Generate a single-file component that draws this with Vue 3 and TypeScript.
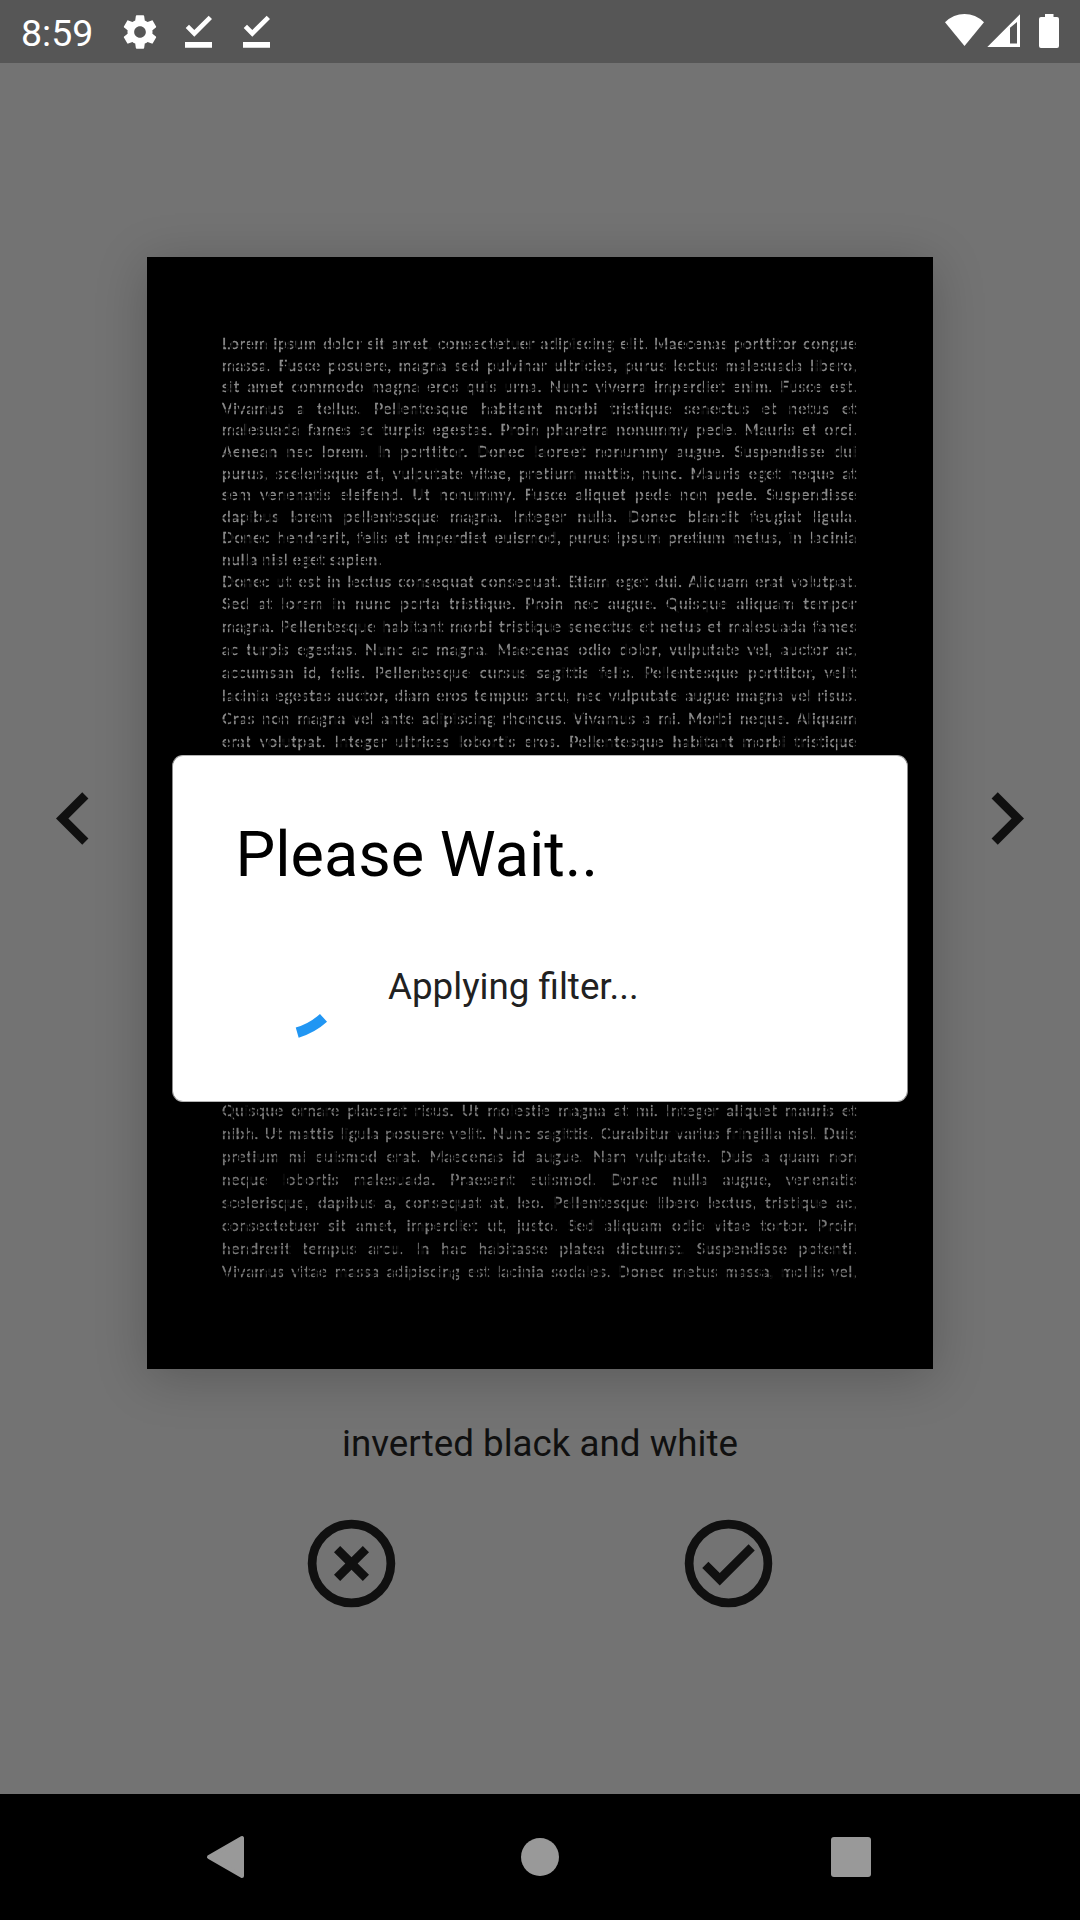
<script setup lang="ts">
interface Block {
  name: string
  lines: string[]
}

const blocks: Block[] = [
  {
    name: 'first',
    lines: [
      'Lorem ipsum dolor sit amet, consectetuer adipiscing elit. Maecenas porttitor congue',
      'massa. Fusce posuere, magna sed pulvinar ultricies, purus lectus malesuada libero,',
      'sit amet commodo magna eros quis urna. Nunc viverra imperdiet enim. Fusce est.',
      'Vivamus a tellus. Pellentesque habitant morbi tristique senectus et netus et',
      'malesuada fames ac turpis egestas. Proin pharetra nonummy pede. Mauris et orci.',
      'Aenean nec lorem. In porttitor. Donec laoreet nonummy augue. Suspendisse dui',
      'purus, scelerisque at, vulputate vitae, pretium mattis, nunc. Mauris eget neque at',
      'sem venenatis eleifend. Ut nonummy. Fusce aliquet pede non pede. Suspendisse',
      'dapibus lorem pellentesque magna. Integer nulla. Donec blandit feugiat ligula.',
      'Donec hendrerit, felis et imperdiet euismod, purus ipsum pretium metus, in lacinia',
      'nulla nisl eget sapien.',
    ],
  },
  {
    name: 'second',
    lines: [
      'Donec ut est in lectus consequat consequat. Etiam eget dui. Aliquam erat volutpat.',
      'Sed at lorem in nunc porta tristique. Proin nec augue. Quisque aliquam tempor',
      'magna. Pellentesque habitant morbi tristique senectus et netus et malesuada fames',
      'ac turpis egestas. Nunc ac magna. Maecenas odio dolor, vulputate vel, auctor ac,',
      'accumsan id, felis. Pellentesque cursus sagittis felis. Pellentesque porttitor, velit',
      'lacinia egestas auctor, diam eros tempus arcu, nec vulputate augue magna vel risus.',
      'Cras non magna vel ante adipiscing rhoncus. Vivamus a mi. Morbi neque. Aliquam',
      'erat volutpat. Integer ultrices lobortis eros. Pellentesque habitant morbi tristique',
    ],
  },
  {
    name: 'third',
    lines: [
      'Quisque ornare placerat risus. Ut molestie magna at mi. Integer aliquet mauris et',
      'nibh. Ut mattis ligula posuere velit. Nunc sagittis. Curabitur varius fringilla nisl. Duis',
      'pretium mi euismod erat. Maecenas id augue. Nam vulputate. Duis a quam non',
      'neque lobortis malesuada. Praesent euismod. Donec nulla augue, venenatis',
      'scelerisque, dapibus a, consequat at, leo. Pellentesque libero lectus, tristique ac,',
      'consectetuer sit amet, imperdiet ut, justo. Sed aliquam odio vitae tortor. Proin',
      'hendrerit tempus arcu. In hac habitasse platea dictumst. Suspendisse potenti.',
      'Vivamus vitae massa adipiscing est lacinia sodales. Donec metus massa, mollis vel,',
    ],
  },
]
</script>

<template>
  <div class="screen">
    <header class="status">
      <span class="time">8:59</span>
      <svg class="gear" viewBox="0 0 24 24"><path d="M19.43 12.98c.04-.32.07-.64.07-.98s-.03-.66-.07-.98l2.11-1.65c.19-.15.24-.42.12-.64l-2-3.46c-.12-.22-.39-.3-.61-.22l-2.49 1c-.52-.4-1.08-.73-1.69-.98l-.38-2.65C14.46 2.18 14.25 2 14 2h-4c-.25 0-.46.18-.49.42l-.38 2.65c-.61.25-1.17.59-1.69.98l-2.49-1c-.23-.09-.49 0-.61.22l-2 3.46c-.13.22-.07.49.12.64l2.11 1.65c-.04.32-.07.65-.07.98s.03.66.07.98l-2.11 1.65c-.19.15-.24.42-.12.64l2 3.46c.12.22.39.3.61.22l2.49-1c.52.4 1.08.73 1.69.98l.38 2.65c.03.24.24.42.49.42h4c.25 0 .46-.18.49-.42l.38-2.65c.61-.25 1.17-.59 1.69-.98l2.49 1c.23.09.49 0 .61-.22l2-3.46c.12-.22.07-.49-.12-.64l-2.11-1.65zM12 15.5c-1.93 0-3.5-1.57-3.5-3.5s1.57-3.5 3.5-3.5 3.5 1.57 3.5 3.5-1.57 3.5-3.5 3.5z" /></svg>
      <svg v-for="n in 2" :key="n" class="done" viewBox="0 0 28 34"><path d="M.7 13 4 9.7l5.3 5.2L23.7.7 27 4 9.3 21.7zM0 27h27v5.8H0z" /></svg>
      <svg class="radio" viewBox="0 0 120 36">
        <path d="M0 9.2Q8.5 1 19.5 1t19.5 8.200L19.500 33z" />
        <path fill-rule="evenodd" d="M42.300 34 75 1.300V34zM65 14.800V30.500h7V9z" />
        <path d="M100 1h8.500v3h3.500q2 0 2 2v27q0 2-2 2H96q-2 0-2-2V6q0-2 2-2h4z" />
      </svg>
    </header>

    <main class="content">
      <section class="viewer">
        <svg class="arrow" viewBox="0 0 24 24"><path d="M15.410 7.410 14 6l-6 6 6 6 1.410-1.410L10.830 12z" /></svg>
        <article class="page">
          <div v-for="block in blocks" :key="block.name" class="block" :class="block.name">
            <p v-for="line in block.lines" :key="line" class="line">{{ line }}</p>
          </div>
        </article>
        <svg class="arrow" viewBox="0 0 24 24"><path d="M8.590 7.410 10 6l6 6-6 6-1.410-1.410L13.170 12z" /></svg>
      </section>
      <p class="caption">inverted black and white</p>
      <div class="actions">
        <svg viewBox="0 0 24 24"><circle cx="12" cy="12" r="9" /><path d="M14.590 8 12 10.590 9.410 8 8 9.410 10.590 12 8 14.590 9.410 16 12 13.410 14.590 16 16 14.590 13.410 12 16 9.410z" /></svg>
        <svg viewBox="0 0 24 24"><circle cx="12" cy="12" r="9" /><path d="M16.590 7.580 10 14.170l-2.590-2.580L6 13l4 4 8-8z" /></svg>
      </div>
    </main>

    <nav class="nav">
      <svg viewBox="0 0 720 126">
        <path class="back" d="M29 63 62 44v38z" />
        <circle cx="360" cy="63" r="19" />
        <rect x="651" y="43" width="40" height="40" rx="3" />
      </svg>
    </nav>

    <div class="dialog" role="dialog">
      <h1>Please Wait..</h1>
      <div class="progress">
        <svg class="spinner" viewBox="0 0 146 146"><path d="M91.200 137.600A67 67 0 0 0 117.500 122.900" /></svg>
        <p>Applying filter...</p>
      </div>
    </div>
  </div>
</template>

<style>
body {
  margin: 0;
}
</style>

<style scoped>
.screen {
  position: relative;
  display: flex;
  flex-direction: column;
  width: 1080px;
  height: 1920px;
  overflow: hidden;
  background: #737373;
  font-family: Roboto, sans-serif;
}
p,
h1 {
  margin: 0;
  font-weight: 400;
}
svg {
  display: block;
  flex: none;
}
.status {
  display: flex;
  align-items: flex-start;
  flex: none;
  box-sizing: border-box;
  height: 63px;
  padding-left: 21px;
  background: #565656;
  color: #fff;
  fill: #fff;
}
.time {
  width: 99px;
  font-size: 37.5px;
  line-height: 43px;
  padding-top: 12px;
}
.gear {
  width: 40px;
  height: 40px;
  margin: 12px 25px 0 0;
}
.done {
  width: 28px;
  height: 34px;
  margin: 15px 30px 0 0;
}
.radio {
  width: 120px;
  height: 36px;
  margin: 13px 15px 0 auto;
}
.content {
  flex: 1;
  display: flex;
  flex-direction: column;
  align-items: center;
  fill: #101010;
  color: #101010;
}
.viewer {
  display: flex;
  align-items: flex-start;
  justify-content: center;
  gap: 21px;
  margin-top: 194px;
}
.arrow {
  width: 105px;
  height: 105px;
  margin-top: 509px;
}
.page {
  box-sizing: border-box;
  width: 786px;
  height: 1112px;
  padding: 76px 76px 0 75px;
  background: #000;
  box-shadow: 0 8px 48px rgba(0, 0, 0, 0.22);
}
.block {
  color: #8c8c8c;
  font: 15.5px/21.6px Lato, sans-serif;
  letter-spacing: 0.7px;
  -webkit-text-stroke: 0.3px #8c8c8c;
  mask-image: repeating-linear-gradient(90deg, #000 0 4px, rgba(0, 0, 0, 0.1) 4px 6px, #000 6px 9px, rgba(0, 0, 0, 0.15) 9px 11px, #000 11px 17px, rgba(0, 0, 0, 0.1) 17px 19px);
}
.line {
  white-space: nowrap;
  text-align: justify;
  text-align-last: justify;
  mask-image: linear-gradient(#000 0 54%, rgba(0, 0, 0, 0.45) 54% 62%, #000 62%);
}
.first .line:last-child {
  text-align-last: left;
}
.second {
  margin-top: -1px;
  line-height: 22.9px;
}
.third {
  margin-top: 346px;
  line-height: 23px;
  color: #7c7c7c;
  -webkit-text-stroke-color: #7c7c7c;
}
.caption {
  margin-top: 53px;
  font-size: 36.75px;
  line-height: 43px;
}
.actions {
  display: flex;
  gap: 272px;
  margin-top: 46px;
}
.actions svg {
  width: 105px;
  height: 105px;
}
.actions circle {
  fill: none;
  stroke: #101010;
  stroke-width: 2;
}
.nav {
  flex: none;
  display: flex;
  justify-content: center;
  height: 126px;
  background: #000;
}
.nav svg {
  width: 720px;
  height: 126px;
  fill: #999;
}
.back {
  stroke: #999;
  stroke-width: 4;
  stroke-linejoin: round;
}
.dialog {
  position: absolute;
  left: 172px;
  top: 755px;
  box-sizing: border-box;
  width: 736px;
  height: 347px;
  padding: 62px 63px 0 62.5px;
  border: 1px solid #b4b4b4;
  border-left-color: #8c8c8c;
  border-right-color: #8c8c8c;
  border-radius: 11px;
  background: #fff;
  color: #000;
}
h1 {
  font-size: 63px;
  line-height: 74px;
}
.progress {
  display: flex;
  align-items: flex-start;
  margin: 3px 0 0 -29.5px;
}
.spinner {
  width: 146px;
  height: 146px;
}
.spinner path {
  fill: none;
  stroke: #2196f3;
  stroke-width: 10.5;
}
.progress p {
  margin: 70px 0 0 36px;
  color: #212121;
  font-size: 36.75px;
  line-height: 43px;
}
</style>
